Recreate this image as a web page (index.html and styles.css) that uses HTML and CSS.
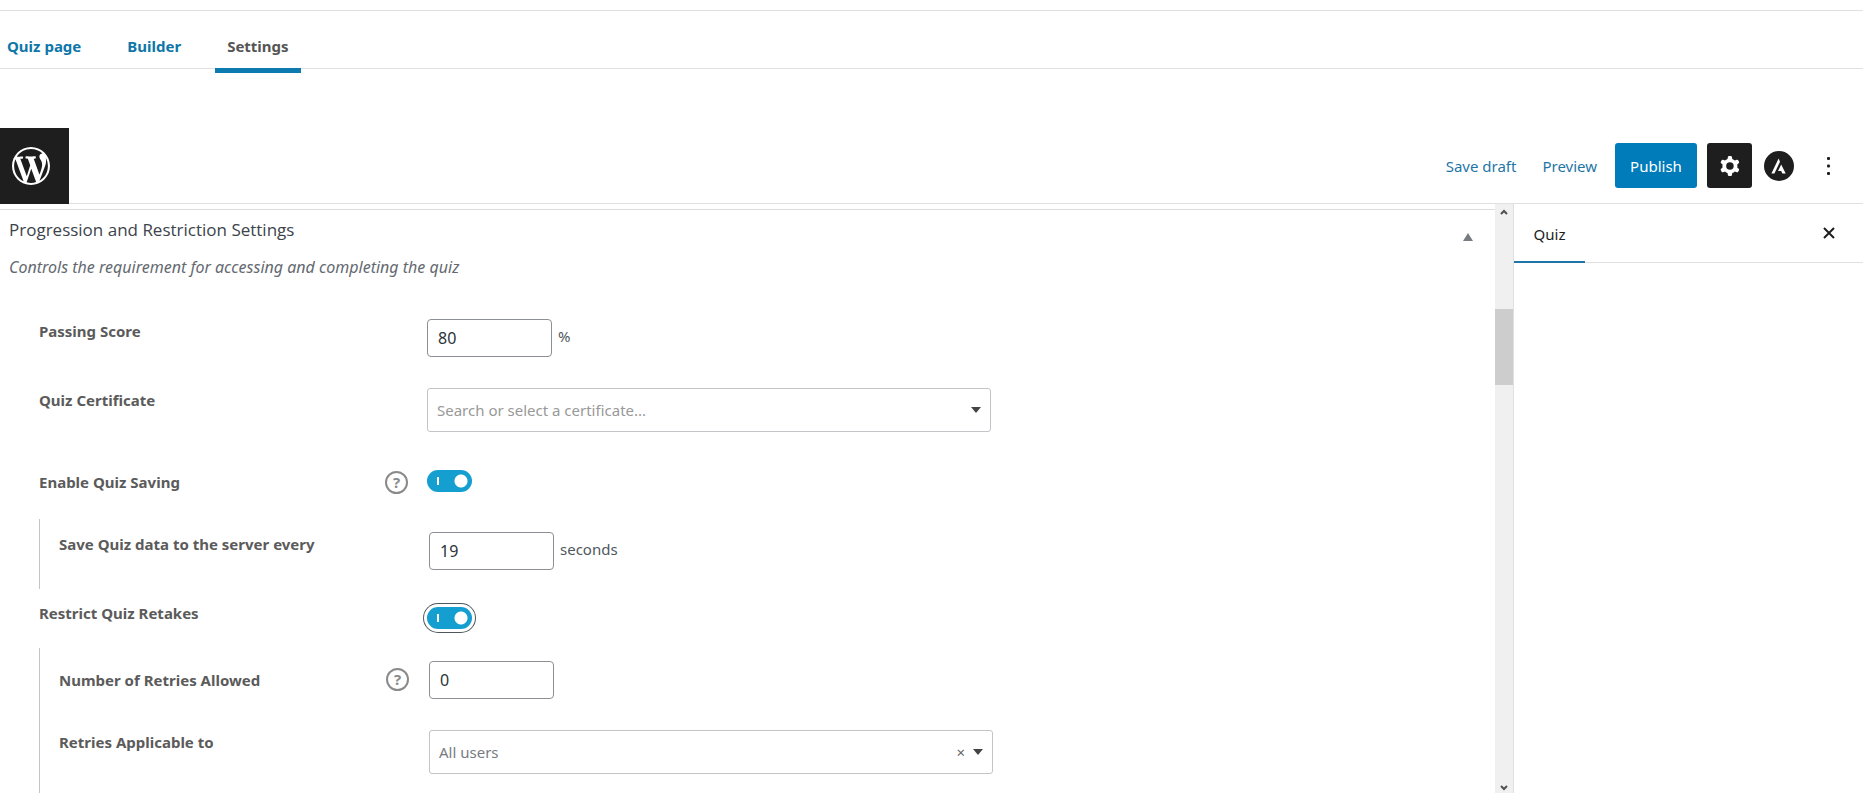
FILE: index.html
```
<!DOCTYPE html>
<html lang="en">
<head>
    <meta charset="UTF-8">
    <meta name="viewport" content="width=device-width, initial-scale=1.0">
    <title>Quiz Settings</title>
    <link rel="stylesheet" href="styles.css">
</head>
<body>
    <nav class="tabs">
        <a href="#quiz-page">Quiz page</a>
        <a href="#builder">Builder</a>
        <a href="#settings" class="active">Settings</a>
    </nav>

    <header class="editor-header">
        <a href="#dashboard" class="wp-logo" aria-label="View posts">
            <svg viewBox="0 0 20 20" width="38" height="38" fill="#fff"><path d="M20 10c0-5.51-4.49-10-10-10C4.48 0 0 4.49 0 10c0 5.52 4.48 10 10 10 5.51 0 10-4.48 10-10zM7.78 15.37L4.37 6.22c.55-.02 1.17-.08 1.17-.08.5-.06.44-1.13-.06-1.11 0 0-1.45.11-2.37.11-.18 0-.37 0-.58-.01C4.12 2.69 6.87 1.11 10 1.11c2.33 0 4.45.87 6.05 2.34-.68-.11-1.65.39-1.65 1.58 0 .74.45 1.36.9 2.1.35.61.55 1.36.55 2.46 0 1.49-1.4 5-1.4 5l-3.03-8.37c.54-.02.82-.17.82-.17.5-.05.44-1.25-.06-1.22 0 0-1.44.12-2.38.12-.87 0-2.33-.12-2.33-.12-.5-.03-.56 1.2-.06 1.22l.92.08 1.26 3.41zM17.41 10c.24-.64.74-1.87.43-4.25.7 1.29 1.05 2.71 1.05 4.25 0 3.29-1.73 6.24-4.4 7.78.97-2.59 1.94-5.2 2.92-7.78zM6.1 18.09C3.12 16.65 1.11 13.53 1.11 10c0-1.3.23-2.48.72-3.59C3.25 10.3 4.67 14.2 6.1 18.09zm4.03-6.63l2.58 6.98c-.86.29-1.76.45-2.71.45-.79 0-1.57-.11-2.29-.33.81-2.38 1.62-4.74 2.42-7.1z"/></svg>
        </a>
        <div class="actions">
            <button type="button" class="link-btn">Save draft</button>
            <button type="button" class="link-btn">Preview</button>
            <button type="button" class="publish">Publish</button>
            <button type="button" class="icon-btn dark" aria-label="Settings">
                <svg viewBox="0 0 24 24" width="30" height="30" fill="#fff" fill-rule="evenodd"><path d="M10.289 4.836A1 1 0 0111.275 4h1.306a1 1 0 01.987.836l.244 1.466c.787.26 1.503.679 2.108 1.218l1.393-.522a1 1 0 011.216.437l.653 1.13a1 1 0 01-.23 1.273l-1.148.944a6.025 6.025 0 010 2.435l1.149.946a1 1 0 01.23 1.272l-.653 1.13a1 1 0 01-1.216.437l-1.394-.522c-.605.54-1.32.958-2.108 1.218l-.244 1.466a1 1 0 01-.987.836h-1.306a1 1 0 01-.986-.836l-.244-1.466a5.995 5.995 0 01-2.108-1.218l-1.394.522a1 1 0 01-1.217-.436l-.653-1.131a1 1 0 01.23-1.272l1.149-.946a6.026 6.026 0 010-2.435l-1.148-.944a1 1 0 01-.23-1.272l.653-1.131a1 1 0 011.217-.437l1.393.522a5.994 5.994 0 012.108-1.218l.244-1.466zM14.929 12a3 3 0 11-6 0 3 3 0 016 0z"/></svg>
            </button>
            <button type="button" class="icon-btn" aria-label="Astra settings">
                <svg viewBox="0 0 30 30" width="30" height="30"><circle cx="15" cy="15" r="15" fill="#1e1e1e"/><path d="M14.6 7.4L7.4 22.4h3L16 10.8z" fill="#fff"/><path d="M17.2 13.4l-3.2 6.6h3.2l1.1 2.4h3.4z" fill="#fff"/></svg>
            </button>
            <button type="button" class="icon-btn more" aria-label="Options">
                <svg viewBox="0 0 3 18" width="3" height="18" fill="#1e1e1e"><rect width="3" height="3" rx="1"/><rect y="7.5" width="3" height="3" rx="1"/><rect y="15" width="3" height="3" rx="1"/></svg>
            </button>
        </div>
    </header>

    <div class="editor-body">
        <main class="content">
            <section class="metabox">
                <div class="metabox-head">
                    <div>
                        <h2>Progression and Restriction Settings</h2>
                        <p>Controls the requirement for accessing and completing the quiz</p>
                    </div>
                    <button type="button" class="toggle-panel" aria-label="Toggle panel">
                        <svg viewBox="0 0 10 8" width="10" height="8" fill="#787c82"><path d="M5 0l5 8H0z"/></svg>
                    </button>
                </div>

                <form class="settings">
                    <div class="row">
                        <label for="passing-score">Passing Score</label>
                        <div class="field">
                            <input type="text" id="passing-score" class="small-input" value="80">
                            <span>%</span>
                        </div>
                    </div>
                    <div class="row">
                        <label for="certificate">Quiz Certificate</label>
                        <div class="select-wrap">
                            <select id="certificate" class="placeholder">
                                <option>Search or select a certificate...</option>
                            </select>
                        </div>
                    </div>
                    <div class="row saving">
                        <label for="saving">Enable Quiz Saving</label>
                        <button type="button" class="help" aria-label="Help">?</button>
                        <input type="checkbox" id="saving" class="switch" checked>
                    </div>
                    <div class="nested">
                        <div class="row">
                            <label for="save-every">Save Quiz data to the server every</label>
                            <div class="field">
                                <input type="text" id="save-every" class="small-input" value="19">
                                <span>seconds</span>
                            </div>
                        </div>
                    </div>
                    <div class="row retakes">
                        <label for="retakes">Restrict Quiz Retakes</label>
                        <input type="checkbox" id="retakes" class="switch focused" checked>
                    </div>
                    <div class="nested">
                        <div class="row retries">
                            <label for="retries">Number of Retries Allowed</label>
                            <button type="button" class="help" aria-label="Help">?</button>
                            <div class="field">
                                <input type="text" id="retries" class="small-input" value="0">
                            </div>
                        </div>
                        <div class="row">
                            <label for="applicable">Retries Applicable to</label>
                            <div class="select-wrap">
                                <select id="applicable">
                                    <option>All users</option>
                                </select>
                                <button type="button" class="clear" aria-label="Clear">×</button>
                            </div>
                        </div>
                    </div>
                </form>
            </section>
        </main>

        <div class="scrollbar" aria-hidden="true">
            <svg viewBox="0 0 8 6" width="8" height="6" fill="none" stroke="#505050" stroke-width="2"><path d="M1 5l3-3 3 3"/></svg>
            <div class="track"><div class="thumb"></div></div>
            <svg viewBox="0 0 8 6" width="8" height="6" fill="none" stroke="#505050" stroke-width="2"><path d="M1 1l3 3 3-3"/></svg>
        </div>

        <aside class="sidebar">
            <div class="sidebar-head">
                <button type="button" class="sidebar-tab">Quiz</button>
                <button type="button" class="close" aria-label="Close settings">
                    <svg viewBox="0 0 12 12" width="12" height="12" stroke="#1e1e1e" stroke-width="2"><path d="M1 1l10 10M11 1L1 11"/></svg>
                </button>
            </div>
        </aside>
    </div>
</body>
</html>
```
FILE: styles.css
```
* { box-sizing: border-box; }
body { font-family: "Noto Sans", "Open Sans", sans-serif; font-size: 15px; line-height: 24px; margin: 0; padding-top: 10px; height: 100vh; display: flex; flex-direction: column; overflow: hidden; background: #fff; color: #50575e; }
button { font: inherit; border: 0; padding: 0; background: none; cursor: pointer; }
svg { display: block; }

/* top tabs */
.tabs { display: flex; flex: none; height: 59px; padding-left: 7px; gap: 22px; border-top: 1px solid #dfe0e2; border-bottom: 1px solid #dfe0e2; }
.tabs a { height: 62px; padding: 23px 12px 0; font-weight: 700; color: #0e76a8; text-decoration: none; }
.tabs a:first-child { padding-left: 0; }
.tabs a.active { color: #555; border-bottom: 5px solid #0e7bb0; }

/* editor header */
.editor-header { display: flex; flex: none; justify-content: space-between; height: 76px; margin-top: 59px; border-bottom: 1px solid #dfe0e2; }
.wp-logo { width: 69px; height: 76px; padding: 19px 12px; background: #1e1e1e; }
.actions { display: flex; align-items: center; padding-right: 12px; }
.link-btn { color: #1f76a6; margin-right: 26px; }
.link-btn + .link-btn { margin-right: 18px; }
.publish { width: 82px; height: 45px; margin-right: 10px; border-radius: 3px; background: #007cba; color: #fff; }
.icon-btn { display: flex; align-items: center; justify-content: center; width: 45px; height: 45px; margin-right: 5px; }
.icon-btn.dark { margin-right: 4px; border-radius: 3px; background: #1e1e1e; }
.icon-btn.more { margin-right: 0; }

.editor-body { display: flex; flex: 1; min-height: 0; }
.content { flex: 1; min-width: 0; overflow: hidden; padding-top: 5px; }
.metabox { border-top: 1px solid #dcdcde; }
.metabox-head { display: flex; justify-content: space-between; padding: 8px 22px 0 9px; }
.metabox-head h2 { margin: 0; font-family: "Open Sans", sans-serif; font-size: 17px; font-weight: 500; color: #3c434a; }
.metabox-head p { margin: 13px 0 0; font-size: 16px; font-style: italic; color: #646970; }
.toggle-panel { width: 10px; height: 38px; display: flex; align-items: center; }

/* settings rows */
.settings { padding: 40px 39px 0; }
.row { position: relative; display: grid; grid-template-columns: 388px 1fr; align-items: start; margin-bottom: 31px; }
.row label { font-weight: 700; color: #5b5b5b; }
.field { display: flex; gap: 6px; }
.field span { padding-top: 5px; }
.small-input { width: 125px; height: 38px; padding: 0 10px; border: 1px solid #8c8f94; border-radius: 4px; font: inherit; font-size: 16px; color: #2c3338; }
.select-wrap { position: relative; width: 564px; max-width: 100%; }
select { width: 100%; height: 44px; padding: 0 36px 0 9px; border: 1px solid #c3c4c7; border-radius: 3px; appearance: none; font: inherit; color: #787c82; background: #fff url("data:image/svg+xml,%3Csvg xmlns='http://www.w3.org/2000/svg' width='10' height='6'%3E%3Cpath d='M0 0h10L5 6z' fill='%23444'/%3E%3C/svg%3E") no-repeat right 9px center; }
select.placeholder { color: #999; }
.clear { position: absolute; right: 28px; top: 10px; color: #666; }
.help { position: absolute; left: 346px; top: 1px; width: 23px; height: 23px; border: 2px solid #8a8a8a; border-radius: 50%; font-size: 15px; font-weight: 700; line-height: 19px; color: #8a8a8a; }

.switch { appearance: none; width: 45px; height: 22px; margin: 0; border-radius: 11px; cursor: pointer; background: linear-gradient(#fff, #fff) no-repeat 10px center / 2px 8px, radial-gradient(circle at 34px 11px, #fff 6px, transparent 7px), #149fd0; }
.switch.focused { box-shadow: 0 0 0 3px #fff, 0 0 0 4px #50575e; }

.saving { margin: 38px 0 25px; }
.nested { border-left: 1px solid #c3c4c7; padding: 13px 0 19px 19px; }
.nested .row { grid-template-columns: 370px 1fr; margin-bottom: 0; }
.nested .help { left: 327px; top: 7px; }
.retakes { margin: 12px 0 19px; }
.retakes .switch { margin-top: 6px; }
.nested .retries { margin-bottom: 31px; }
.retries label { padding-top: 7px; }

/* scrollbar */
.scrollbar { display: flex; flex: none; flex-direction: column; align-items: center; width: 18px; padding: 5px 0 2px; background: #f0f0f0; }
.track { flex: 1; width: 100%; padding-top: 94px; }
.thumb { height: 76px; background: #cdcdcd; }

/* sidebar */
.sidebar { flex: none; width: 350px; border-left: 1px solid #dfe0e2; }
.sidebar-head { display: flex; justify-content: space-between; height: 59px; border-bottom: 1px solid #dfe0e2; }
.sidebar-tab { width: 71px; height: 59px; padding-top: 2px; border-bottom: 2px solid #1f76a6; color: #1e1e1e; }
.close { padding: 0 28px; }
```
